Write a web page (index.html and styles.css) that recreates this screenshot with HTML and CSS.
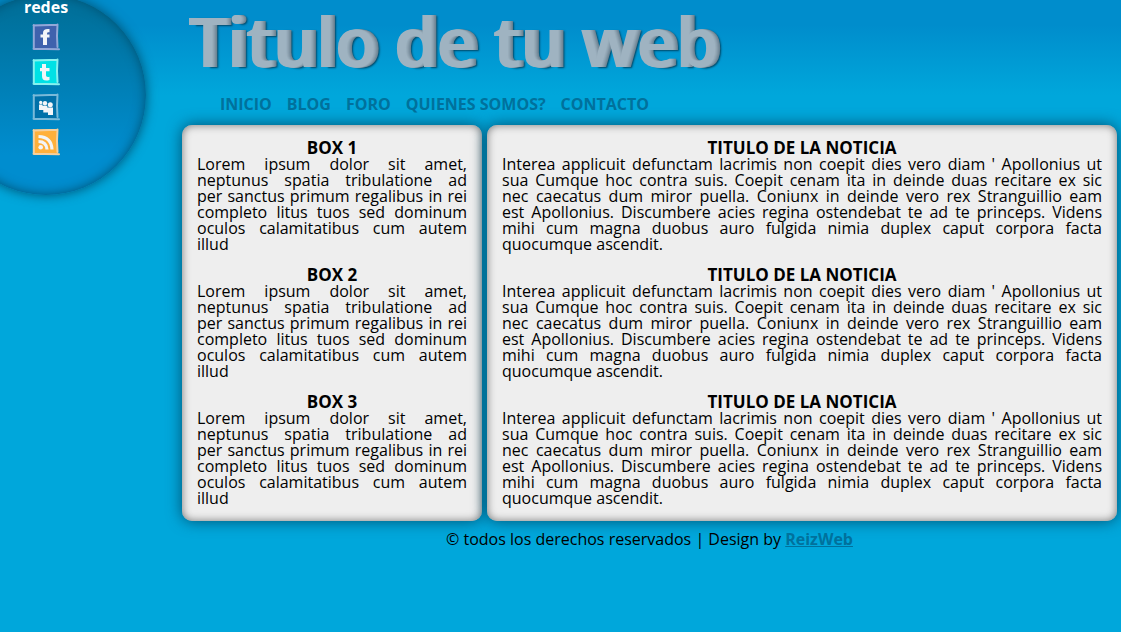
FILE: index.html
```html
<!DOCTYPE html>
<html lang="es">
<head>
<meta charset="utf-8">
<title>Titulo de tu web</title>
<link rel="stylesheet" href="styles.css">
</head>
<body>
<aside class="social">
  <h2 class="social-title">redes</h2>
  <a class="social-link" href="#" aria-label="Facebook">
    <svg viewBox="1 0 27 28"><path d="M1.500 2.500 4 1.500 26 1 26.500 15 26 25 27.500 26.500 3 27 1.500 25Z" fill="#3f62ad"/><path d="M2 2.500 26 1.800 M2.300 2V26 M26 1.500 25.500 13 26 24 M2 25.800 14 26 27.500 26.300" fill="none" stroke="#92a8d8" stroke-width="2" stroke-linecap="round"/><path d="M11.500 22V14.500H9V11.500H11.500V10C11.500 7 13.500 5.500 18 6V9.300C16 9 15.500 9.500 15.500 11.500H18V14.500H15.500V22Z" fill="#f3f5f8"/></svg>
  </a>
  <a class="social-link" href="#" aria-label="Twitter">
    <svg viewBox="1 0 27 28"><path d="M1.500 2.500 4 1.500 26 1 26.500 15 26 25 27.500 26.500 3 27 1.500 25Z" fill="#00e1e5"/><path d="M2 2.500 26 1.800 M2.300 2V26 M26 1.500 25.500 13 26 24 M2 25.800 14 26 27.500 26.300" fill="none" stroke="#86f1ee" stroke-width="2" stroke-linecap="round"/><path d="M10.500 6H14.500V10H18V13.300H14.500V17.500Q14.500 19.500 18 18.700V22Q10.500 24 10.500 18V13.300H8.500V10H10.500Z" fill="#f3f5f8"/></svg>
  </a>
  <a class="social-link" href="#" aria-label="MySpace">
    <svg viewBox="1 0 27 28"><path d="M1.500 2.500 4 1.500 26 1 26.500 15 26 25 27.500 26.500 3 27 1.500 25Z" fill="#0071a9"/><path d="M2 2.500 26 1.800 M2.300 2V26 M26 1.500 25.500 13 26 24 M2 25.800 14 26 27.500 26.300" fill="none" stroke="#79bad9" stroke-width="2" stroke-linecap="round"/><g fill="#f3f5f8"><circle cx="9.200" cy="9.500" r="1.700"/><circle cx="13.500" cy="10.300" r="2.200"/><circle cx="18.800" cy="11.800" r="2.500"/><path d="M7.500 11.500H11V12.800H15.800V14.500H21.500V22H16.500V19.500H11.800V17H7.500Z"/></g></svg>
  </a>
  <a class="social-link" href="#" aria-label="RSS">
    <svg viewBox="1 0 27 28"><path d="M1.500 2.500 4 1.500 26 1 26.500 15 26 25 27.500 26.500 3 27 1.500 25Z" fill="#ffb03b"/><path d="M2 2.500 26 1.800 M2.300 2V26 M26 1.500 25.500 13 26 24 M2 25.800 14 26 27.500 26.300" fill="none" stroke="#f4d0a0" stroke-width="2" stroke-linecap="round"/><circle cx="9.200" cy="19.300" r="2.300" fill="#f3f5f8"/><path d="M7 13.500Q15 13.500 15.500 21.500M7 8.500Q20 9 20.500 21.500" fill="none" stroke="#f3f5f8" stroke-width="3.200"/></svg>
  </a>
</aside>
<div class="page">
  <header class="header">
    <h1 class="site-title">Titulo de tu web</h1>
    <nav class="menu">
      <a href="#">INICIO</a>
      <a href="#">BLOG</a>
      <a href="#">FORO</a>
      <a href="#">QUIENES SOMOS?</a>
      <a href="#">CONTACTO</a>
    </nav>
  </header>
  <main class="columns">
    <section class="panel">
      <article><h3>BOX 1</h3><p>Lorem ipsum dolor sit amet, neptunus spatia tribulatione ad per&nbsp;sanctus primum regalibus in rei completo litus tuos sed dominum oculos calamitatibus cum autem illud</p></article>
      <article><h3>BOX 2</h3><p>Lorem ipsum dolor sit amet, neptunus spatia tribulatione ad per&nbsp;sanctus primum regalibus in rei completo litus tuos sed dominum oculos calamitatibus cum autem illud</p></article>
      <article><h3>BOX 3</h3><p>Lorem ipsum dolor sit amet, neptunus spatia tribulatione ad per&nbsp;sanctus primum regalibus in rei completo litus tuos sed dominum oculos calamitatibus cum autem illud</p></article>
    </section>
    <section class="panel">
      <article><h3>TITULO DE LA NOTICIA</h3><p>Interea applicuit defunctam lacrimis non coepit dies vero diam ' Apollonius ut sua Cumque hoc contra suis. Coepit cenam ita in deinde duas recitare ex sic nec&nbsp;caecatus dum miror puella. Coniunx in deinde vero rex Stranguillio eam est&nbsp;Apollonius. Discumbere acies regina ostendebat te ad te princeps. Videns mihi&nbsp;cum magna duobus auro fulgida nimia duplex caput corpora facta quocumque&nbsp;ascendit.</p></article>
      <article><h3>TITULO DE LA NOTICIA</h3><p>Interea applicuit defunctam lacrimis non coepit dies vero diam ' Apollonius ut sua Cumque hoc contra suis. Coepit cenam ita in deinde duas recitare ex sic nec&nbsp;caecatus dum miror puella. Coniunx in deinde vero rex Stranguillio eam est&nbsp;Apollonius. Discumbere acies regina ostendebat te ad te princeps. Videns mihi&nbsp;cum magna duobus auro fulgida nimia duplex caput corpora facta quocumque&nbsp;ascendit.</p></article>
      <article><h3>TITULO DE LA NOTICIA</h3><p>Interea applicuit defunctam lacrimis non coepit dies vero diam ' Apollonius ut sua Cumque hoc contra suis. Coepit cenam ita in deinde duas recitare ex sic nec&nbsp;caecatus dum miror puella. Coniunx in deinde vero rex Stranguillio eam est&nbsp;Apollonius. Discumbere acies regina ostendebat te ad te princeps. Videns mihi&nbsp;cum magna duobus auro fulgida nimia duplex caput corpora facta quocumque&nbsp;ascendit.</p></article>
    </section>
  </main>
  <footer class="footer">© todos los derechos reservados | Design by <a href="#">ReizWeb</a></footer>
</div>
</body>
</html>
```
FILE: styles.css
```css
* { box-sizing: border-box; margin: 0; padding: 0; }
html { background: #00a7db; }
body {
  min-height: 100vh;
  overflow-x: hidden;
  background: #00a7db linear-gradient(#008dcc 0, #008dcc 25px, #00a7db 95px) no-repeat;
  font: 16px/16px "Open Sans", "Noto Sans", sans-serif;
  color: #000;
}
.social {
  position: absolute;
  top: -5px;
  left: -54px;
  width: 200px;
  height: 200px;
  padding-top: 4px;
  border-radius: 50%;
  background: linear-gradient(#00719c 10%, #008dcf 80%);
  box-shadow: 0 0 12px #005070, inset 0 0 12px #005070;
  display: flex;
  flex-direction: column;
  align-items: center;
  gap: 7px;
}
.social-title { color: #fff; font-size: 16px; line-height: 17px; }
.social-link, .social-link svg { display: block; width: 28px; height: 28px; }
.page { padding: 0 4px 0 182px; }
.header { height: 125px; }
.site-title {
  padding-left: 6px;
  font-size: 68px;
  font-weight: 600;
  line-height: 82px;
  color: #9fb3c1;
  text-shadow: 1px 0 #9fb3c1, 2px 0 #98acba, 3px 0 #8fa4b2, 4px 0 #8599a8, 5px 0 #788e9d, 6px 0 #6d8493, 7px 1px 2px #004766;
}
.menu { display: flex; gap: 15px; padding: 14px 0 0 38px; }
.menu a { color: #00719c; font-weight: bold; text-decoration: none; }
.columns { display: grid; grid-template-columns: 300px 1fr; gap: 5px; }
.panel {
  display: flex;
  flex-direction: column;
  gap: 15px;
  padding: 15px;
  border-radius: 10px;
  background: #eee;
  box-shadow: 0 0 15px #005070, inset 0 0 8px #777;
}
.panel h3 { font-size: 17px; line-height: 16px; text-align: center; }
.panel p { text-align: justify; }
.footer { padding-top: 10px; text-align: center; }
.footer a { color: #00719c; font-weight: bold; }
```
